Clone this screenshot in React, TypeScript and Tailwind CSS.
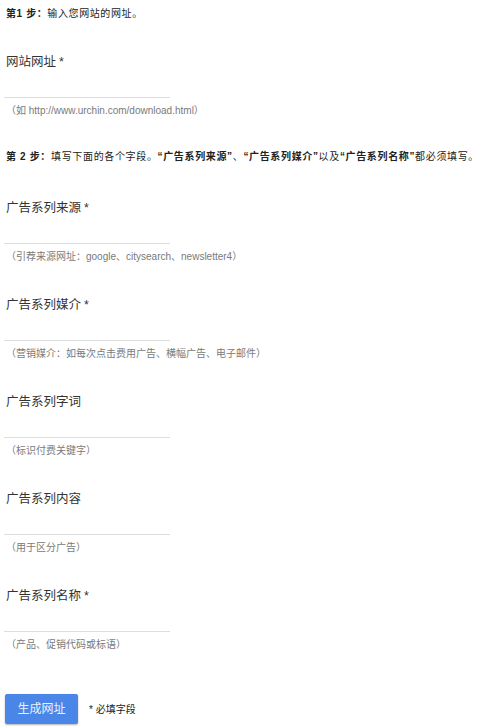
const FONT = "font-['Liberation_Sans','Noto_Sans_CJK_SC',sans-serif]";

type FieldProps = {
  label: string;
  required?: boolean;
  hint: string;
  gap: string;
};

function Field({ label, required, hint, gap }: FieldProps) {
  return (
    <div className={`flex flex-col ${gap}`}>
      <div className="h-[18px] text-[12.5px] leading-[18px] text-[#333]">
        {label}
        {required && <span className="ml-[3px]">*</span>}
      </div>
      <div className="mt-[26px] ml-[-2px] h-px w-[166px] bg-[#dedede]" />
      <div className="mt-[6px] h-[14px] text-[10px] leading-[14px] text-[#7a7a7a]">{hint}</div>
    </div>
  );
}

export default function App() {
  return (
    <div className={`flex min-h-[728px] w-[484px] flex-col bg-white pl-[6px] pt-[7px] ${FONT}`}>
      <p className="h-[14px] text-[10px] leading-[14px] tracking-[0.6px] text-[#222]">
        <b>第1 步：</b>输入您网站的网址。
      </p>

      <Field gap="mt-[32px]" label="网站网址" required hint="（如 http://www.urchin.com/download.html）" />

      <p className="mt-[32px] h-[14px] whitespace-nowrap text-[10px] leading-[14px] tracking-[0.65px] text-[#222]">
        <b>第 2 步：</b>填写下面的各个字段。<b>“广告系列来源”</b>、<b>“广告系列媒介”</b>以及<b>“广告系列名称”</b>都必须填写。
      </p>

      <Field gap="mt-[35px]" label="广告系列来源" required hint="（引荐来源网址：google、citysearch、newsletter4）" />
      <Field gap="mt-[32px]" label="广告系列媒介" required hint="（营销媒介：如每次点击费用广告、横幅广告、电子邮件）" />
      <Field gap="mt-[32px]" label="广告系列字词" hint="（标识付费关键字）" />
      <Field gap="mt-[32px]" label="广告系列内容" hint="（用于区分广告）" />
      <Field gap="mt-[32px]" label="广告系列名称" required hint="（产品、促销代码或标语）" />

      <div className="mt-[42px] flex items-center">
        <button className="ml-[-1px] h-[30px] w-[73px] rounded-[2px] bg-[#4a86e8] text-[12px] text-[#e8f0fe] shadow-[0_1px_2px_rgba(0,0,0,0.3)]">
          生成网址
        </button>
        <span className="ml-[11px] text-[10px] text-[#222]">* 必填字段</span>
      </div>
    </div>
  );
}
